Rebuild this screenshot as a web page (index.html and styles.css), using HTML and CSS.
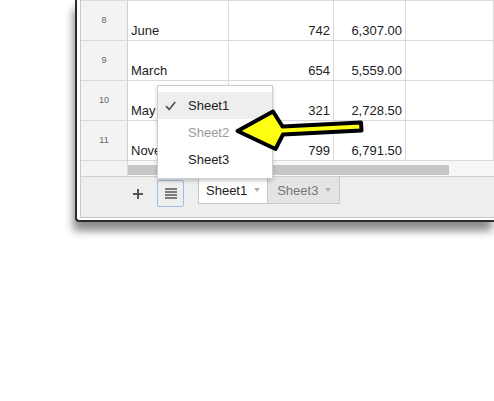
FILE: index.html
```html
<!DOCTYPE html>
<html>
<head>
<meta charset="utf-8">
<link rel="stylesheet" href="styles.css">
</head>
<body>
<div class="window">
  <div class="inner">
    <div class="grid">
      <div class="row">
        <div class="cell head">8</div><div class="cell txt">June</div><div class="cell num">742</div><div class="cell num">6,307.00</div><div class="cell"></div>
      </div>
      <div class="row">
        <div class="cell head">9</div><div class="cell txt">March</div><div class="cell num">654</div><div class="cell num">5,559.00</div><div class="cell"></div>
      </div>
      <div class="row">
        <div class="cell head">10</div><div class="cell txt">May</div><div class="cell num">321</div><div class="cell num">2,728.50</div><div class="cell"></div>
      </div>
      <div class="row">
        <div class="cell head">11</div><div class="cell txt">November</div><div class="cell num">799</div><div class="cell num">6,791.50</div><div class="cell"></div>
      </div>
    </div>
    <div class="scrollrow">
      <div class="sc-head"></div>
      <div class="sc-track"><div class="thumb"></div></div>
    </div>
    <div class="bar">
      <div class="plus">
        <svg width="10" height="10" viewBox="0 0 10 10"><path d="M5 0v10M0 5h10" stroke="#555" stroke-width="2"/></svg>
      </div>
      <div class="listbtn">
        <svg width="12" height="11" viewBox="0 0 12 11"><path d="M0 1h12M0 4h12M0 7h12M0 10h12" stroke="#555" stroke-width="1.6"/></svg>
      </div>
      <div class="tabs">
        <div class="tab active">Sheet1<span class="caret"></span></div>
        <div class="tab">Sheet3<span class="caret"></span></div>
      </div>
    </div>
  </div>
</div>

<div class="menu">
  <div class="item sel">
    <svg class="check" width="11" height="10" viewBox="0 0 11 10"><path d="M1 5.2l3.2 3.3L10.2 1" fill="none" stroke="#555" stroke-width="1.8"/></svg>
    <span>Sheet1</span>
  </div>
  <div class="item dis"><span class="nocheck"></span><span>Sheet2</span></div>
  <div class="item"><span class="nocheck"></span><span>Sheet3</span></div>
</div>

<svg class="arrow" width="494" height="401" viewBox="0 0 494 401">
  <polygon points="237.5,131 273,111.5 282.5,126.5 361,122.5 361.5,130.5 283,134.5 275.5,149" fill="#ffff14" stroke="#000" stroke-width="4" stroke-linejoin="round"/>
</svg>
</body>
</html>
```

FILE: styles.css
```css
html, body {
  margin: 0;
  padding: 0;
  background: #fff;
  overflow: hidden;
  width: 494px;
  height: 401px;
}
body {
  font-family: "Liberation Sans", Arial, sans-serif;
  font-size: 13px;
  color: #222;
  position: relative;
}
.window {
  margin-left: 75px;
  width: 414px;
  border: 2px solid #2b2b2b;
  border-top: 0;
  border-right: 0;
  border-radius: 0 0 0 4px;
  padding: 0 0 2px 3px;
  background: #fff;
  box-shadow: -2px 9px 9px rgba(0, 0, 0, 0.45);
}
.inner {
  border-left: 1px solid #c8c8c8;
  border-bottom: 1px solid #c8c8c8;
}
.grid {
  border-top: 1px solid #dcdcdc;
}
.row, .scrollrow {
  display: grid;
  grid-template-columns: 47px 101px 105px 72px 1fr;
}
.row {
  height: 40px;
}
.cell {
  box-sizing: border-box;
  border-right: 1px solid #dadada;
  border-bottom: 1px solid #dadada;
  display: flex;
  align-items: flex-end;
  padding: 0 3px 2px 3px;
  line-height: 15px;
  white-space: nowrap;
  overflow: hidden;
}
.cell.head {
  background: #f3f3f3;
  justify-content: center;
  align-items: center;
  padding: 0;
  font-size: 9px;
  color: #666;
  border-right-color: #cfcfcf;
}
.cell.num {
  justify-content: flex-end;
}
.scrollrow {
  grid-template-columns: 47px 1fr;
  height: 16px;
  box-sizing: border-box;
  border-bottom: 1px solid #cfcfcf;
}
.sc-head {
  background: #f3f3f3;
  border-right: 1px solid #dadada;
}
.sc-track {
  background: #f7f7f7;
}
.thumb {
  margin-top: 4px;
  width: 321px;
  height: 10px;
  background: #c6c6c6;
}
.bar {
  height: 40px;
  background: #eeeeee;
  display: flex;
  align-items: flex-start;
}
.plus {
  margin: 3px 0 0 50px;
  width: 14px;
  height: 27px;
  display: flex;
  align-items: center;
  justify-content: center;
}
.listbtn {
  margin: 3px 0 0 12px;
  width: 27px;
  height: 27px;
  box-sizing: border-box;
  border: 1px solid #9fbde6;
  border-radius: 2px;
  display: flex;
  align-items: center;
  justify-content: center;
}
.tabs {
  display: flex;
  margin-left: 14px;
}
.tab {
  height: 27px;
  box-sizing: border-box;
  border: 1px solid #c8c8c8;
  border-top: 0;
  border-left: 0;
  background: #e4e4e4;
  color: #777;
  display: flex;
  align-items: center;
  padding: 0 8px 0 9px;
}
.tab.active {
  background: #fff;
  color: #222;
  border-left: 1px solid #c8c8c8;
  padding: 0 7px 0 7px;
}
.caret {
  margin-left: 7px;
  width: 0;
  height: 0;
  border-left: 3.5px solid transparent;
  border-right: 3.5px solid transparent;
  border-top: 4px solid #b0b0b0;
}
.menu {
  position: absolute;
  left: 157px;
  top: 85px;
  width: 116px;
  box-sizing: border-box;
  background: #fff;
  border: 1px solid #cfcfcf;
  box-shadow: 0 2px 4px rgba(0, 0, 0, 0.2);
  padding: 6px 0 5px 0;
}
.item {
  height: 27px;
  display: flex;
  align-items: center;
  padding-left: 7px;
  color: #222;
}
.item.sel {
  background: #eeeeee;
}
.item.dis {
  color: #9a9a9a;
}
.check, .nocheck {
  width: 11px;
  margin-right: 12px;
  flex: none;
}
.nocheck {
  display: inline-block;
  height: 1px;
}
.arrow {
  position: absolute;
  left: 0;
  top: 0;
  pointer-events: none;
}
```
